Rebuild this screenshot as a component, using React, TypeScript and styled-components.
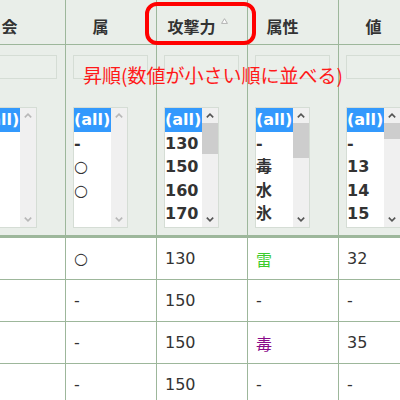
import React from 'react';
import styled, { createGlobalStyle } from 'styled-components';

const Global = createGlobalStyle`
  html, body {
    margin: 0;
    padding: 0;
    background: #fff;
    overflow: hidden;
  }
  body {
    font-family: "DejaVu Sans", "Noto Sans CJK JP", sans-serif;
    color: #333;
  }
`;

const Page = styled.div`
  position: relative;
  width: 400px;
  height: 400px;
  overflow: hidden;
`;

const Table = styled.div`
  margin-left: -25px;
  width: 460px;
`;

const Row = styled.div<{ $line?: number; $bg?: string }>`
  display: flex;
  background: ${(p) => p.$bg || '#fff'};
  border-bottom: ${(p) => p.$line || 1}px solid #9db79b;
`;

const HeadCell = styled.div`
  width: 91px;
  flex: none;
  height: 44px;
  box-sizing: border-box;
  padding: 8px 21px 0 0;
  border-right: 1px solid #9db79b;
  display: flex;
  align-items: center;
  justify-content: center;
  font-weight: bold;
  font-size: 16px;
  color: #333;
`;

const HeadLabel = styled.span`
  position: relative;
`;

const SortMark = styled.svg`
  position: absolute;
  left: calc(100% + 5px);
  top: 4px;
`;

const FilterCell = styled.div`
  width: 91px;
  flex: none;
  height: 190px;
  box-sizing: border-box;
  padding: 10px 0 0 7px;
  border-right: 1px solid #9db79b;
  display: flex;
  flex-direction: column;
  align-items: flex-start;
`;

const FilterInput = styled.div`
  width: 75px;
  height: 24px;
  box-sizing: border-box;
  border: 1px solid #d5ddd5;
  background: #eaefea;
  margin-bottom: 28px;
`;

const ListBox = styled.div`
  width: 55px;
  height: 121px;
  box-sizing: border-box;
  border: 1px solid #d5ddd5;
  background: #fff;
  display: flex;
  overflow: hidden;
`;

const Options = styled.div`
  width: 37px;
  overflow: hidden;
`;

const Option = styled.div<{ $sel?: boolean }>`
  height: 23.5px;
  line-height: 24px;
  font-weight: bold;
  font-size: 16px;
  white-space: nowrap;
  color: ${(p) => (p.$sel ? '#fff' : '#333')};
  background: ${(p) => (p.$sel ? '#3399fd' : 'transparent')};
`;

const Scroll = styled.div`
  width: 16px;
  background: #f0f0f0;
  display: flex;
  flex-direction: column;
  align-items: center;
`;

const Arrow = styled.svg`
  flex: none;
  margin: 5px 0;
`;

const Track = styled.div`
  flex: 1;
  width: 100%;
`;

const Thumb = styled.div<{ $h: number }>`
  width: 100%;
  height: ${(p) => p.$h}px;
  background: #cdcdcd;
`;

const DataCell = styled.div<{ $color?: string }>`
  width: 91px;
  flex: none;
  height: 41px;
  box-sizing: border-box;
  padding-left: 8px;
  border-right: 1px solid #9db79b;
  display: flex;
  align-items: center;
  font-size: 16px;
  color: ${(p) => p.$color || '#333'};
`;

const Highlight = styled.div`
  position: absolute;
  left: 145px;
  top: 2px;
  width: 111px;
  height: 43px;
  box-sizing: border-box;
  border: 4px solid #ff0000;
  border-radius: 12px;
`;

const Note = styled.div`
  position: absolute;
  left: 83px;
  top: 64px;
  font-family: "Noto Sans CJK JP", sans-serif;
  font-size: 19px;
  line-height: 1.15;
  color: #ff1a1a;
  white-space: nowrap;
`;

const heads = ['会', '属', '攻撃力', '属性', '値'];

type Filter = { opts: string[]; thumb?: number };

const filters: Filter[] = [
  { opts: [] },
  { opts: ['-', '○', '○'] },
  { opts: ['130', '150', '160', '170'], thumb: 31 },
  { opts: ['-', '毒', '水', '氷'], thumb: 35 },
  { opts: ['-', '13', '14', '15'], thumb: 16 },
];

type Cell = { t: string; c?: string };

const rows: Cell[][] = [
  [{ t: '' }, { t: '○' }, { t: '130' }, { t: '雷', c: '#3ccc2c' }, { t: '32' }],
  [{ t: '' }, { t: '-' }, { t: '150' }, { t: '-' }, { t: '-' }],
  [{ t: '' }, { t: '-' }, { t: '150' }, { t: '毒', c: '#8a0a8a' }, { t: '35' }],
  [{ t: '' }, { t: '-' }, { t: '150' }, { t: '-' }, { t: '-' }],
];

function Chevron({ up, on }: { up?: boolean; on?: boolean }) {
  return (
    <Arrow width="8" height="5" viewBox="0 0 8 5">
      <path
        d={up ? 'M0.8 4.4 L4 1.2 L7.2 4.4' : 'M0.8 0.6 L4 3.8 L7.2 0.6'}
        fill="none"
        stroke={on ? '#555' : '#b8b8b8'}
        strokeWidth="1.6"
      />
    </Arrow>
  );
}

export default function App() {
  return (
    <Page>
      <Global />
      <Table>
        <Row $bg="#e9eee9">
          {heads.map((h) => (
            <HeadCell key={h}>
              <HeadLabel>
                {h}
                {h === '攻撃力' && (
                  <SortMark width="7" height="6" viewBox="0 0 7 6">
                    <path d="M3.5 0.7 L6.4 5.4 L0.6 5.4 Z" fill="#fff" stroke="#aaa" strokeWidth="0.9" />
                  </SortMark>
                )}
              </HeadLabel>
            </HeadCell>
          ))}
        </Row>
        <Row $bg="#e9eee9" $line={3}>
          {filters.map((f, i) => (
            <FilterCell key={i}>
              <FilterInput />
              <ListBox>
                <Options>
                  <Option $sel>(all)</Option>
                  {f.opts.map((o, j) => (
                    <Option key={j}>{o}</Option>
                  ))}
                </Options>
                <Scroll>
                  <Chevron up on={!!f.thumb} />
                  <Track>{f.thumb && <Thumb $h={f.thumb} />}</Track>
                  <Chevron on={!!f.thumb} />
                </Scroll>
              </ListBox>
            </FilterCell>
          ))}
        </Row>
        {rows.map((r, i) => (
          <Row key={i}>
            {r.map((c, j) => (
              <DataCell key={j} $color={c.c}>
                {c.t}
              </DataCell>
            ))}
          </Row>
        ))}
      </Table>
      <Highlight />
      <Note>昇順(数値が小さい順に並べる)</Note>
    </Page>
  );
}
